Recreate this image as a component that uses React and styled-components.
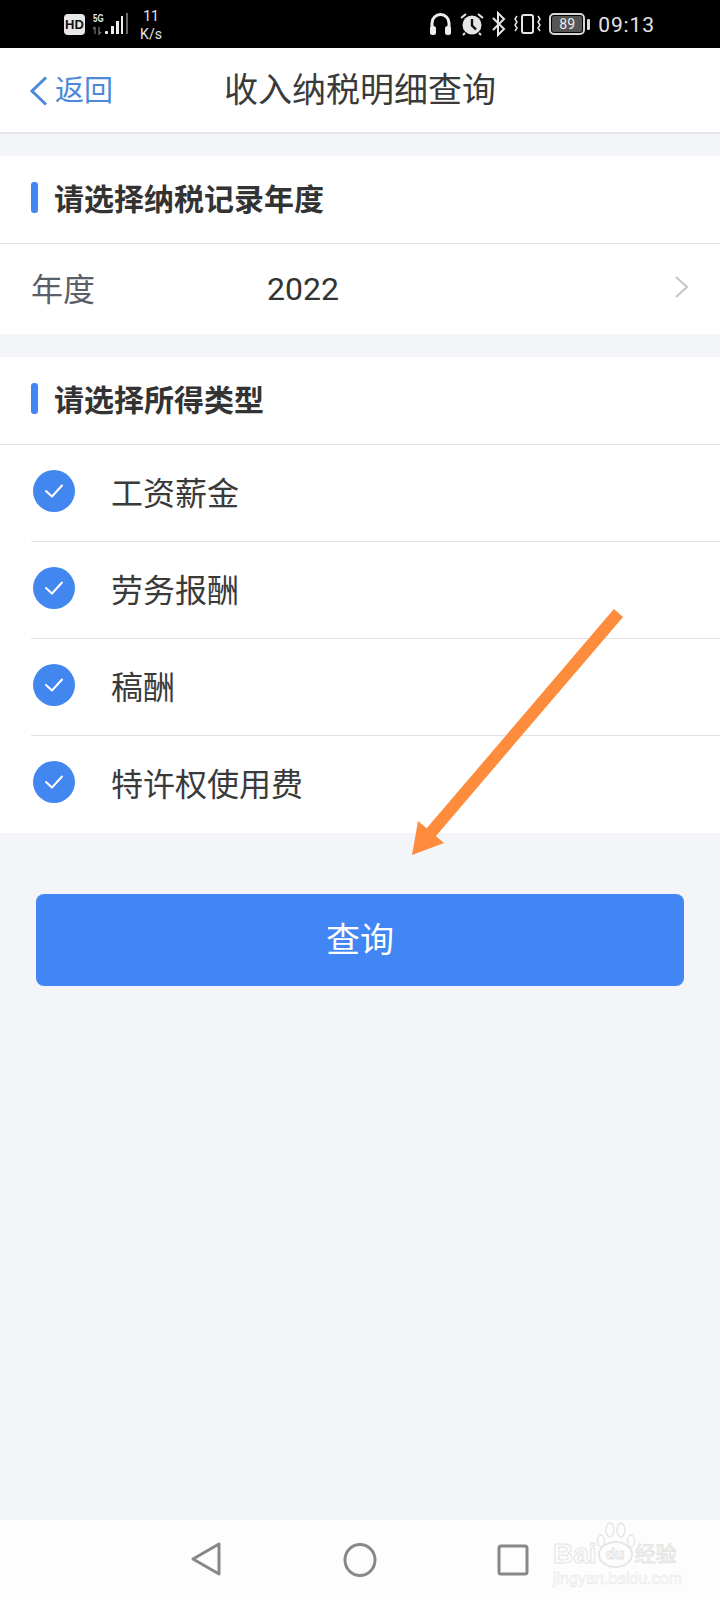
import React from "react";
import styled, { createGlobalStyle } from "styled-components";

const Global = createGlobalStyle`
  html, body { margin: 0; padding: 0; background: #f4f5f9; }
  * { box-sizing: border-box; }
`;
const CJK = `Roboto, "Noto Sans CJK SC", sans-serif`;

const Page = styled.div`
  position: relative;
  width: 720px;
  height: 1600px;
  display: flex;
  flex-direction: column;
  background: #f4f5f9;
  font-family: ${CJK};
  color: #333;
  overflow: hidden;
`;
const StatusBar = styled.div`
  height: 48px;
  background: #000;
  color: #e6e6e6;
  display: flex;
  align-items: center;
  padding: 0 65px 0 64px;
  flex: none;
`;
const HdBadge = styled.span`
  width: 21px;
  height: 21px;
  border-radius: 4px;
  background: #e8e8e8;
  color: #111;
  font: 700 13px/21px "Liberation Sans", sans-serif;
  text-align: center;
  margin-top: 1px;
`;
const Signal = styled.div`
  position: relative;
  width: 37px;
  height: 24px;
  margin-left: 7px;
`;
const FiveG = styled.span`
  position: absolute;
  left: 1px;
  top: 0;
  font: 700 11px/12px "Liberation Sans", sans-serif;
  transform: scaleX(0.72);
  transform-origin: left;
`;
const Speed = styled.div`
  width: 24px;
  margin-left: 10px;
  font: 400 14px/18px Roboto, sans-serif;
  text-align: center;
  margin-top: 1px;
`;
const StatusRight = styled.div`
  margin-left: auto;
  display: flex;
  align-items: center;
  gap: 8px;
`;
const BatteryBox = styled.div`
  width: 36px;
  height: 22px;
  border: 2px solid #d8d8d8;
  border-radius: 5px;
  padding: 1px;
  display: flex;
`;
const BatteryFill = styled.div`
  flex: 1;
  background: #555;
  border-radius: 2px;
  color: #eee;
  font: 400 14px/16px Roboto, sans-serif;
  text-align: center;
`;
const BatteryCap = styled.div`
  width: 3px;
  height: 11px;
  background: #d8d8d8;
  border-radius: 1px;
  margin-left: -6px;
`;
const Clock = styled.span`
  font: 400 21px/24px Roboto, sans-serif;
  letter-spacing: 0.9px;
  color: #e4e4e4;
  margin-top: 2px;
`;
const NavBar = styled.header`
  position: relative;
  height: 86px;
  flex: none;
  background: #fff;
  border-bottom: 2px solid #e4e5e9;
  display: flex;
  align-items: center;
  justify-content: center;
`;
const Back = styled.div`
  position: absolute;
  left: 29px;
  top: 23px;
  display: flex;
  align-items: center;
  gap: 6px;
  color: #4a8ad9;
  font-size: 29px;
  line-height: 40px;
`;
const Title = styled.h1`
  margin: 0;
  font-size: 34px;
  font-weight: 400;
  color: #3a3a3a;
  line-height: 48px;
`;
const Section = styled.section`
  background: #fff;
  margin-top: ${(p) => p.$top}px;
  flex: none;
`;
const SectionHead = styled.div`
  height: 88px;
  display: flex;
  align-items: center;
  padding-left: 31px;
  gap: 16px;
  border-bottom: 1px solid #e3e3e5;
  font-size: 30px;
  font-weight: 700;
  color: #333;
`;
const Bar = styled.span`
  width: 7px;
  height: 31px;
  border-radius: 3px;
  background: #4286f4;
  margin-top: -4px;
`;
const SectionName = styled.span`
  margin-top: -6px;
`;
const YearRow = styled.div`
  height: 90px;
  display: flex;
  align-items: center;
  padding: 0 30px 0 31px;
`;
const YearLabel = styled.span`
  width: 236px;
  font-size: 32px;
  color: #5a6069;
  margin-top: -4px;
`;
const YearValue = styled.span`
  font-size: 32px;
  color: #333;
  flex: 1;
`;
const OptionList = styled.div`
  padding-left: 31px;
`;
const Option = styled.div`
  height: 97px;
  display: flex;
  align-items: center;
  gap: 36px;
  font-size: 32px;
  color: #3a3a3a;
  border-bottom: 1px solid #e3e3e5;
  &:last-child {
    border-bottom-color: transparent;
  }
`;
const OptionName = styled.span`
  margin-top: -4px;
`;
const Check = styled.span`
  width: 42px;
  height: 42px;
  margin-left: 2px;
  margin-top: -5px;
  border-radius: 50%;
  background: #4286f0;
  display: flex;
  align-items: center;
  justify-content: center;
`;
const Query = styled.button`
  display: block;
  flex: none;
  width: 648px;
  height: 92px;
  margin: 61px 0 0 36px;
  border: 0;
  border-radius: 8px;
  background: #4286f5;
  color: #fff;
  font-family: ${CJK};
  font-size: 34px;
  padding: 0 0 5px;
`;
const BottomNav = styled.footer`
  position: relative;
  margin-top: auto;
  height: 80px;
  background: #fdfdfd;
  flex: none;
`;
const NavIcons = styled.svg`
  position: absolute;
  left: 0;
  top: 0;
`;
const Mark = styled.div`
  position: absolute;
  left: 553px;
  top: 19px;
  width: 140px;
  color: #fdfdfd;
  -webkit-text-stroke: 1px #e4e4e4;
`;
const MarkTop = styled.div`
  display: flex;
  align-items: center;
  font: 700 28px/30px "Liberation Sans", "Noto Sans CJK SC", sans-serif;
`;
const MarkDu = styled.span`
  width: 35px;
  height: 27px;
  margin: 0 2px 0 1px;
  border: 2px solid #e6e6e6;
  border-radius: 50%;
  font-size: 15px;
  line-height: 22px;
  text-align: center;
`;
const MarkCn = styled.span`
  font-size: 21px;
  font-weight: 400;
  line-height: 28px;
  white-space: nowrap;
`;
const MarkUrl = styled.div`
  font: 400 16px/18px "Liberation Sans", sans-serif;
  -webkit-text-stroke: 0.5px #e6e6e6;
  white-space: nowrap;
  margin-top: 1px;
`;
const Paw = styled.svg`
  position: absolute;
  left: 43px;
  top: -17px;
`;
const Arrow = styled.svg`
  position: absolute;
  left: 0;
  top: 0;
  pointer-events: none;
`;

const CheckMark = () => (
  <svg width="20" height="16" viewBox="0 0 20 16" fill="none">
    <path d="M2 8l6 5.5L18 2.5" stroke="#fff" strokeWidth="2" strokeLinecap="round" strokeLinejoin="round" />
  </svg>
);

const options = ["工资薪金", "劳务报酬", "稿酬", "特许权使用费"];

export default function App() {
  return (
    <Page>
      <Global />
      <StatusBar>
        <HdBadge>HD</HdBadge>
        <Signal>
          <FiveG>5G</FiveG>
          <svg width="37" height="24" viewBox="0 0 37 24">
            <path d="M3 15v7M1 17l2-2M7 15v7l2-2" stroke="#777" strokeWidth="1.2" fill="none" />
            <rect x="13" y="19" width="3" height="3" rx="1" fill="#eee" />
            <rect x="19" y="14" width="3" height="8" fill="#eee" />
            <rect x="24" y="9" width="3" height="13" fill="#eee" />
            <rect x="29" y="4" width="2" height="18" fill="#eee" />
            <rect x="34" y="1" width="2" height="21" fill="#666" />
          </svg>
        </Signal>
        <Speed>
          11
          <br />
          K/s
        </Speed>
        <StatusRight>
          <svg width="23" height="24" viewBox="0 0 23 24">
            <path d="M3 19v-8a8.5 8.5 0 0 1 17 0v8" fill="none" stroke="#eee" strokeWidth="3" />
            <rect x="1" y="14" width="6" height="9" rx="2.5" fill="#eee" />
            <rect x="16" y="14" width="6" height="9" rx="2.5" fill="#eee" />
          </svg>
          <svg width="24" height="24" viewBox="0 0 24 24">
            <circle cx="12" cy="13" r="9.5" fill="#e6e6e6" />
            <path d="M12 7v6.5l4 4" fill="none" stroke="#111" strokeWidth="2.4" />
            <path d="M1 6l5-4M23 6l-5-4M5 21l-2 2M19 21l2 2" stroke="#e6e6e6" strokeWidth="2" />
          </svg>
          <svg width="15" height="26" viewBox="0 0 15 26" style={{ marginLeft: -1 }}>
            <path d="M2 7l11 11-6 6V2l6 6L2 19" fill="none" stroke="#e6e6e6" strokeWidth="2" />
          </svg>
          <svg width="27" height="22" viewBox="0 0 27 22">
            <rect x="8" y="2" width="11" height="18" rx="2" fill="none" stroke="#e6e6e6" strokeWidth="2" />
            <path d="M3 3l-2 3 2 3-2 3 2 3-2 3M24 3l2 3-2 3 2 3-2 3 2 3" fill="none" stroke="#e6e6e6" strokeWidth="1.5" />
          </svg>
          <BatteryBox>
            <BatteryFill>89</BatteryFill>
          </BatteryBox>
          <BatteryCap />
          <Clock>09:13</Clock>
        </StatusRight>
      </StatusBar>
      <NavBar>
        <Back>
          <svg width="20" height="32" viewBox="0 0 20 32" fill="none">
            <path d="M17 2.5L3 16l14 13.5" stroke="#4a8ad9" strokeWidth="3" />
          </svg>
          返回
        </Back>
        <Title>收入纳税明细查询</Title>
      </NavBar>
      <Section $top={22}>
        <SectionHead>
          <Bar />
          <SectionName>请选择纳税记录年度</SectionName>
        </SectionHead>
        <YearRow>
          <YearLabel>年度</YearLabel>
          <YearValue>2022</YearValue>
          <svg width="16" height="24" viewBox="0 0 16 24" fill="none" style={{ marginTop: -4 }}>
            <path d="M2 2l11 10L2 22" stroke="#c4c6cb" strokeWidth="2" />
          </svg>
        </YearRow>
      </Section>
      <Section $top={23}>
        <SectionHead>
          <Bar />
          <SectionName>请选择所得类型</SectionName>
        </SectionHead>
        <OptionList>
          {options.map((o) => (
            <Option key={o}>
              <Check>
                <CheckMark />
              </Check>
              <OptionName>{o}</OptionName>
            </Option>
          ))}
        </OptionList>
      </Section>
      <Query>查询</Query>
      <BottomNav>
        <NavIcons width="720" height="80" viewBox="0 0 720 80" fill="none">
          <path d="M219 24v30l-26-15z" stroke="#888" strokeWidth="3" strokeLinejoin="round" />
          <ellipse cx="360" cy="40" rx="15" ry="15.5" stroke="#888" strokeWidth="3" />
          <rect x="499" y="26" width="28" height="28" rx="2" stroke="#888" strokeWidth="3" />
        </NavIcons>
        <Mark>
          <Paw width="40" height="36" viewBox="0 0 40 36" fill="none" stroke="#e6e6e6" strokeWidth="1.5">
            <ellipse cx="5" cy="19" rx="3.5" ry="6" />
            <ellipse cx="14" cy="8" rx="4" ry="7" />
            <ellipse cx="25" cy="8" rx="4" ry="7" />
            <ellipse cx="35" cy="19" rx="3.5" ry="6" />
          </Paw>
          <MarkTop>
            Bai<MarkDu>du</MarkDu>
            <MarkCn>经验</MarkCn>
          </MarkTop>
          <MarkUrl>jingyan.baidu.com</MarkUrl>
        </Mark>
      </BottomNav>
      <Arrow width="720" height="1600" viewBox="0 0 720 1600">
        <path d="M618.5 613L428 836" stroke="#fd8c3c" strokeWidth="12" fill="none" />
        <path d="M412 855l6-34 26 22z" fill="#fd8c3c" />
      </Arrow>
    </Page>
  );
}
